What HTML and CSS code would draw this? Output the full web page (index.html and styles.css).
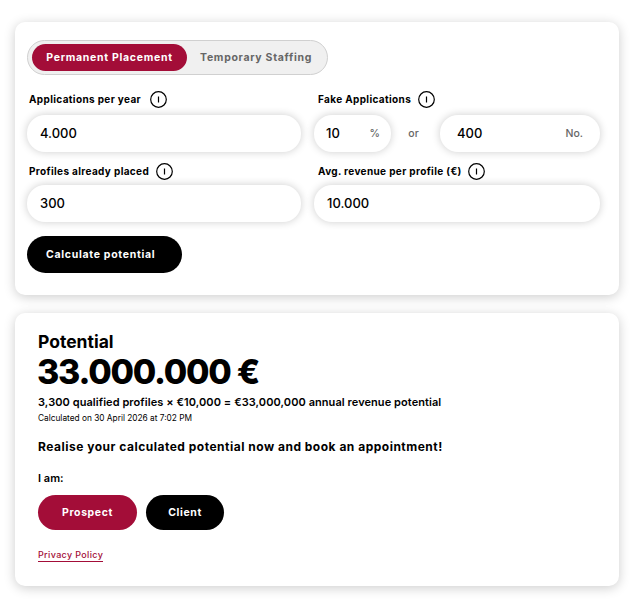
FILE: index.html
```html
<!DOCTYPE html>
<html lang="en">
<head>
<meta charset="utf-8">
<title>Potential calculator</title>
<link rel="stylesheet" href="styles.css">
</head>
<body>
<section class="card calc">
  <div class="toggle">
    <span class="tab active">Permanent Placement</span>
    <span class="tab">Temporary Staffing</span>
  </div>
  <div class="grid">
    <div class="field">
      <div class="label gap-l">Applications per year <svg class="info" viewBox="0 0 17 17"><circle cx="8.5" cy="8.5" r="7.8"/><path d="M8.5 5.5v6"/></svg></div>
      <div class="input">4.000</div>
    </div>
    <div class="field right">
      <div class="label gap-s">Fake Applications <svg class="info" viewBox="0 0 17 17"><circle cx="8.5" cy="8.5" r="7.8"/><path d="M8.5 5.5v6"/></svg></div>
      <div class="split">
        <div class="input pct"><span>10</span><span class="unit">%</span></div>
        <span class="or">or</span>
        <div class="input num"><span>400</span><span class="unit">No.</span></div>
      </div>
    </div>
    <div class="field">
      <div class="label tight gap-s">Profiles already placed <svg class="info" viewBox="0 0 17 17"><circle cx="8.5" cy="8.5" r="7.8"/><path d="M8.5 5.5v6"/></svg></div>
      <div class="input">300</div>
    </div>
    <div class="field right">
      <div class="label tight gap-xs">Avg. revenue per profile (€) <svg class="info" viewBox="0 0 17 17"><circle cx="8.5" cy="8.5" r="7.8"/><path d="M8.5 5.5v6"/></svg></div>
      <div class="input">10.000</div>
    </div>
  </div>
  <button class="btn calc-btn">Calculate potential</button>
</section>
<section class="card result">
  <h2 class="title">Potential</h2>
  <div class="amount">33.000.000 €</div>
  <p class="formula">3,300 qualified profiles × €10,000 = €33,000,000 annual revenue potential</p>
  <p class="stamp">Calculated on 30 April 2026 at 7:02 PM</p>
  <p class="cta">Realise your calculated potential now and book an appointment!</p>
  <p class="iam">I am:</p>
  <div class="actions">
    <button class="btn prospect">Prospect</button>
    <button class="btn client">Client</button>
  </div>
  <a class="privacy" href="#">Privacy Policy</a>
</section>
</body>
</html>
```

FILE: styles.css
```css
* { box-sizing: border-box; }
html, body { height: 100%; }
body {
  margin: 0;
  padding: 22px 16px 22px 15px;
  background: #fff;
  font-family: "Inter", "Liberation Sans", sans-serif;
  color: #000;
}
.card {
  background: #fff;
  border-radius: 10px;
  box-shadow: 0 2px 12px rgba(0, 0, 0, 0.2);
}
.calc {
  height: 273px;
  padding: 18px 19px 0 12px;
  margin-bottom: 18px;
}
.toggle {
  display: flex;
  align-items: center;
  width: 301px;
  height: 35px;
  padding: 0 4px;
  background: #f0f0f0;
  border: 1px solid #d0d0d0;
  border-radius: 18px;
}
.tab {
  font-size: 10.5px;
  font-weight: 700;
  letter-spacing: 0.7px;
  color: #666;
  padding-left: 13px;
  white-space: nowrap;
}
.tab.active {
  width: 155px;
  height: 27px;
  line-height: 27px;
  padding: 0;
  text-align: center;
  color: #fff;
  background: #a30d38;
  border-radius: 14px;
}
.grid {
  display: grid;
  grid-template-columns: 274px 286px;
  column-gap: 13px;
  row-gap: 8px;
  margin-top: 13px;
}
.label {
  display: flex;
  align-items: center;
  gap: 8px;
  height: 22px;
  margin: 0 0 5px 2px;
  font-size: 10px;
  font-weight: 700;
  letter-spacing: 0.36px;
}
.right .label { margin-left: 4px; }
.label.tight { margin-bottom: 3px; }
.label.gap-l { gap: 9px; }
.label.gap-s { gap: 7px; }
.label.gap-xs { gap: 6px; }
.info {
  width: 17px;
  height: 17px;
  fill: none;
  stroke: #000;
  stroke-width: 1.2;
}
.input {
  display: flex;
  align-items: center;
  justify-content: space-between;
  height: 37px;
  padding: 0 13px 1px;
  background: #fff;
  border-radius: 18px;
  box-shadow: 0 0 8px rgba(0, 0, 0, 0.2);
  font-size: 13px;
  font-weight: 500;
}
.split {
  display: flex;
  align-items: center;
}
.pct { width: 77px; padding: 0 11px 1px 12px; }
.num { width: 160px; padding: 0 17px 1px 17px; }
.or {
  width: 49px;
  padding-right: 4px;
  text-align: center;
  font-size: 10.5px;
  font-weight: 500;
  color: #666;
}
.unit {
  font-size: 10.5px;
  font-weight: 500;
  color: #666;
}
.btn {
  border: 0;
  color: #fff;
  font-family: inherit;
  font-weight: 700;
  font-size: 10.5px;
  letter-spacing: 0.6px;
  border-radius: 19px;
  background: #000;
}
.calc-btn {
  display: block;
  width: 155px;
  height: 37px;
  margin-top: 14px;
  padding: 0 0 0 19px;
  text-align: left;
  letter-spacing: 0.7px;
}
.result {
  height: 273px;
  padding: 19px 0 0 23px;
}
.title {
  margin: 0;
  font-size: 17.5px;
  line-height: 20px;
  font-weight: 700;
}
.amount {
  margin: 0 0 0 -1px;
  font-size: 34px;
  line-height: 40px;
  font-weight: 800;
  letter-spacing: -1.25px;
}
.formula {
  margin: 3px 0 0;
  font-size: 11px;
  line-height: 14px;
  font-weight: 600;
  letter-spacing: 0.07px;
}
.stamp {
  margin: 3px 0 0;
  font-size: 8.3px;
  line-height: 12px;
}
.cta {
  margin: 15px 0 0;
  font-size: 12px;
  line-height: 16px;
  font-weight: 700;
  letter-spacing: 0.5px;
}
.iam {
  margin: 16px 0 0;
  font-size: 11px;
  line-height: 14px;
  font-weight: 600;
}
.actions {
  display: flex;
  gap: 9px;
  margin-top: 10px;
}
.actions .btn { height: 35px; border-radius: 18px; }
.prospect { width: 99px; background: #a30d38; }
.client { width: 78px; }
.privacy {
  display: inline-block;
  margin-top: 19px;
  font-size: 9px;
  line-height: 12px;
  font-weight: 500;
  letter-spacing: 0.35px;
  color: #a30d38;
  text-decoration: none;
  border-bottom: 1px solid #a30d38;
}
```
